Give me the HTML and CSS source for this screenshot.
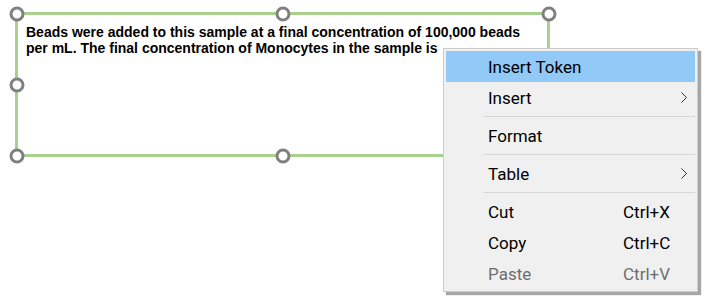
FILE: index.html
```html
<!DOCTYPE html>
<html lang="en">
<head>
    <meta charset="UTF-8">
    <title>Text Box Context Menu</title>
    <link rel="stylesheet" href="styles.css">
</head>
<body>

    <div class="canvas">
        <div class="text-box">
            <p class="text-content">Beads were added to this sample at a final concentration of 100,000 beads per mL. The final concentration of Monocytes in the sample is</p>

            <span class="handle top left"></span>
            <span class="handle top center"></span>
            <span class="handle top right"></span>
            <span class="handle middle left"></span>
            <span class="handle middle right"></span>
            <span class="handle bottom left"></span>
            <span class="handle bottom center"></span>
            <span class="handle bottom right"></span>
        </div>

        <ul class="context-menu">
            <li class="menu-item active"><span class="label">Insert Token</span></li>
            <li class="menu-item">
                <span class="label">Insert</span>
                <span class="shortcut"></span>
                <svg class="arrow" width="6" height="11" viewBox="0 0 6 11"><polyline points="0.5,0.5 5.5,5.5 0.5,10.5" fill="none" stroke="#333" stroke-width="1"/></svg>
            </li>
            <li class="separator"></li>
            <li class="menu-item"><span class="label">Format</span></li>
            <li class="separator"></li>
            <li class="menu-item">
                <span class="label">Table</span>
                <span class="shortcut"></span>
                <svg class="arrow" width="6" height="11" viewBox="0 0 6 11"><polyline points="0.5,0.5 5.5,5.5 0.5,10.5" fill="none" stroke="#333" stroke-width="1"/></svg>
            </li>
            <li class="separator"></li>
            <li class="menu-item"><span class="label">Cut</span><span class="shortcut">Ctrl+X</span></li>
            <li class="menu-item"><span class="label">Copy</span><span class="shortcut">Ctrl+C</span></li>
            <li class="menu-item disabled"><span class="label">Paste</span><span class="shortcut">Ctrl+V</span></li>
        </ul>
    </div>

</body>
</html>
```

FILE: styles.css
```css
body {
    margin: 0;
    background-color: #fff;
}

.canvas {
    position: relative;
    width: 706px;
    height: 300px;
    padding: 12px 0 0 15px;
    box-sizing: border-box;
}

.text-box {
    position: relative;
    width: 535px;
    height: 145px;
    border: 3px solid #a9d18e;
    box-sizing: border-box;
    padding: 9px 20px 0 8px;
}

.text-content {
    margin: 0;
    font-family: "Liberation Sans", Arial, sans-serif;
    font-weight: bold;
    font-size: 14px;
    line-height: 16px;
    color: #000;
}

.handle {
    position: absolute;
    width: 15px;
    height: 15px;
    border: 3px solid #7f7f7f;
    border-radius: 50%;
    background-color: #fff;
    box-sizing: border-box;
    transform: translate(-50%, -50%);
}

.handle.top { top: -1.5px; }
.handle.middle { top: 50%; }
.handle.bottom { top: calc(100% + 1.5px); }
.handle.left { left: -1.5px; }
.handle.center { left: 50%; }
.handle.right { left: calc(100% + 1.5px); }

.context-menu {
    position: absolute;
    left: 443px;
    top: 48px;
    z-index: 2;
    width: 255px;
    margin: 0;
    padding: 2px;
    list-style: none;
    box-sizing: border-box;
    background-color: #f0f0f0;
    border: 1px solid #cccccc;
    box-shadow: 3px 3px 1px rgba(0, 0, 0, 0.35);
    font-family: Roboto, "Noto Sans", sans-serif;
    font-size: 17px;
    color: #000;
}

.menu-item {
    display: grid;
    grid-template-columns: 135px 49px 23px;
    align-items: center;
    height: 31px;
    padding-left: 42px;
}

.menu-item.active {
    background-color: #91c9f7;
}

.menu-item.disabled {
    color: #6d6d6d;
}

.arrow {
    justify-self: center;
}

.separator {
    height: 7px;
    margin-left: 37px;
    position: relative;
}

.separator::after {
    content: "";
    position: absolute;
    left: 0;
    right: 0;
    top: 3px;
    height: 1px;
    background-color: #d7d7d7;
}
```
